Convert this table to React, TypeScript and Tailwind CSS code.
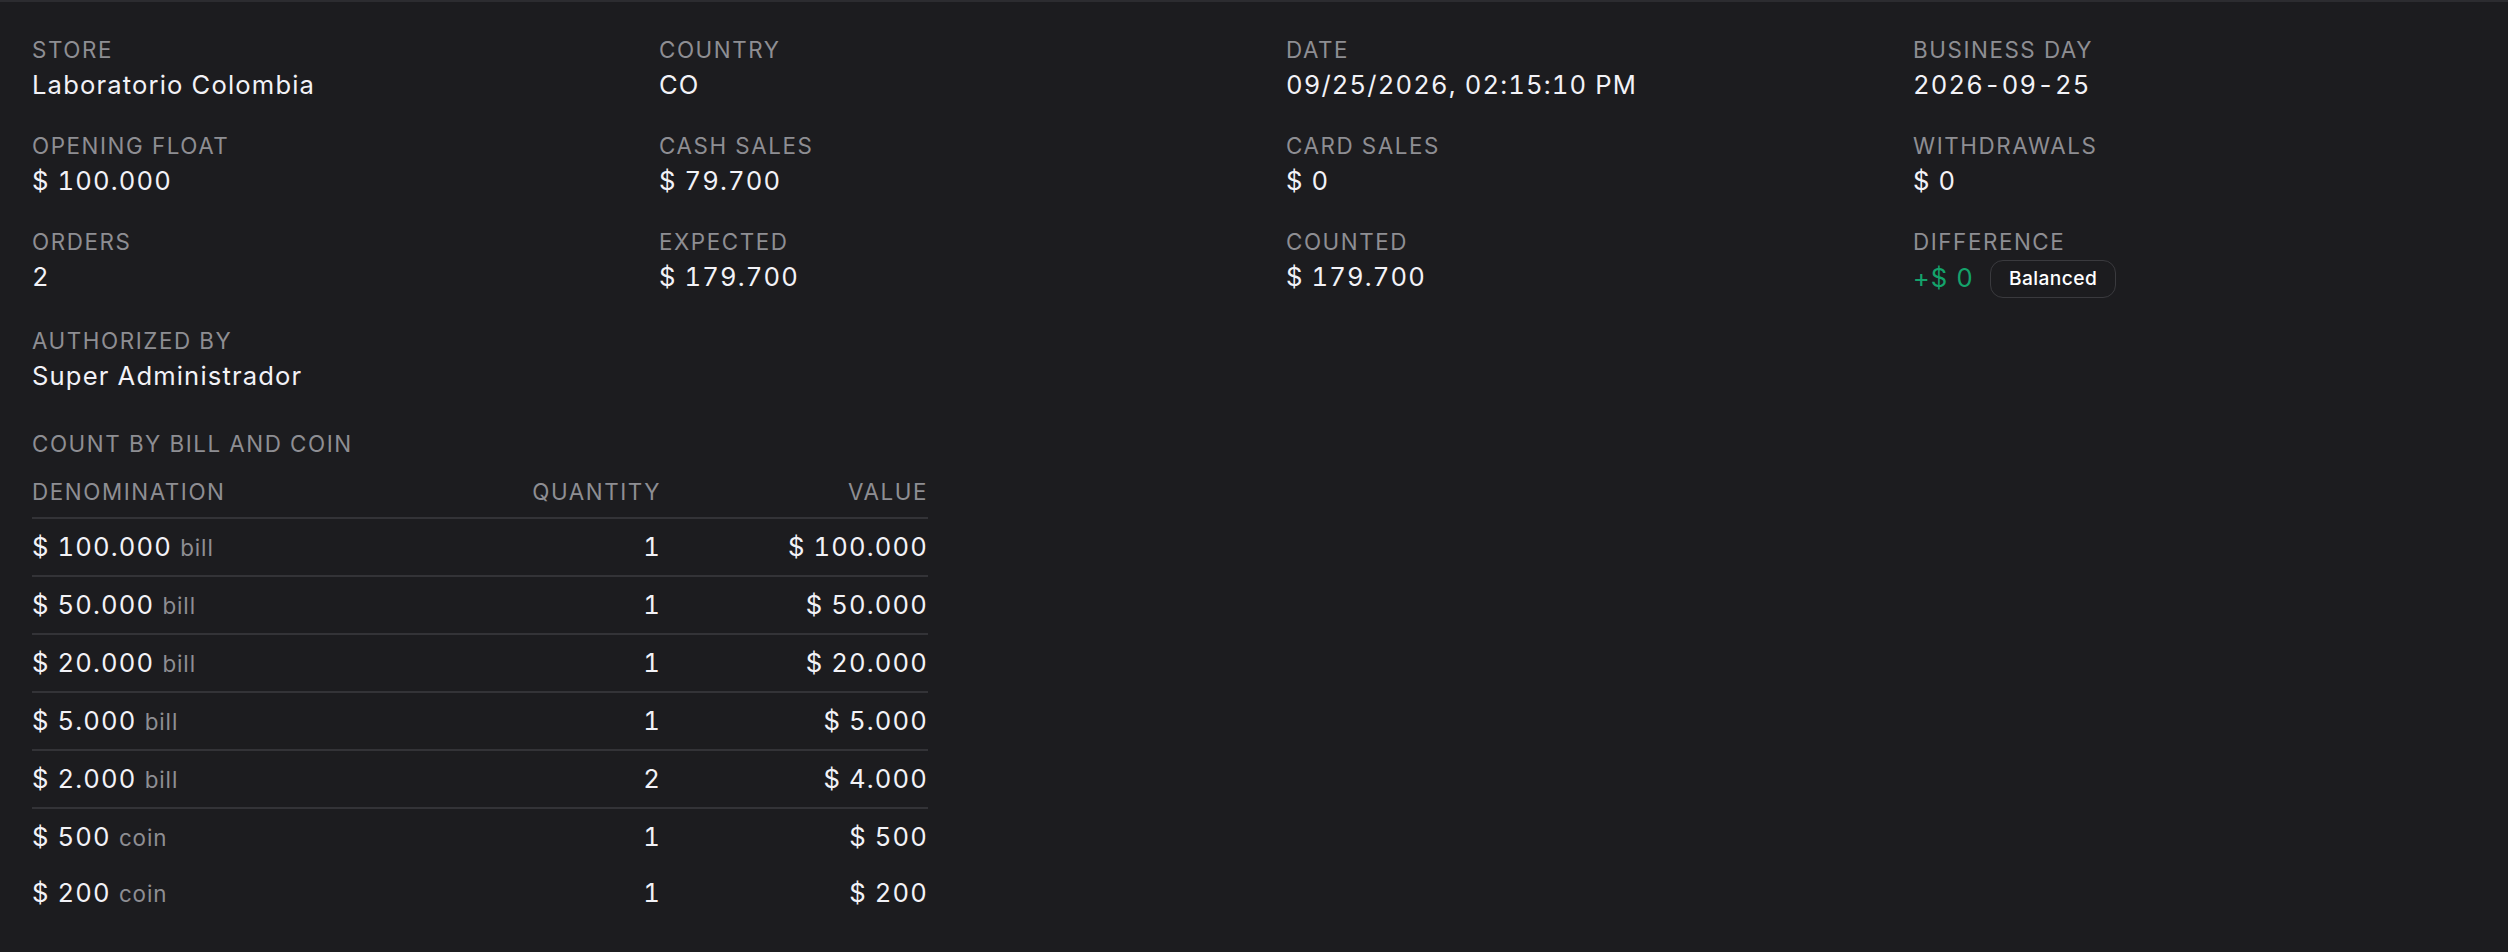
import React from 'react';

interface Field {
  label: string;
  value: string;
}

interface CountRow {
  amount: string;
  kind: 'bill' | 'coin';
  qty: number;
  total: string;
}

const fields: Field[] = [
  { label: 'Store', value: 'Laboratorio Colombia' },
  { label: 'Country', value: 'CO' },
  { label: 'Date', value: '09/25/2026, 02:15:10 PM' },
  { label: 'Business day', value: '2026-09-25' },
  { label: 'Opening float', value: '$ 100.000' },
  { label: 'Cash sales', value: '$ 79.700' },
  { label: 'Card sales', value: '$ 0' },
  { label: 'Withdrawals', value: '$ 0' },
  { label: 'Orders', value: '2' },
  { label: 'Expected', value: '$ 179.700' },
  { label: 'Counted', value: '$ 179.700' },
];

const rows: CountRow[] = [
  { amount: '$ 100.000', kind: 'bill', qty: 1, total: '$ 100.000' },
  { amount: '$ 50.000', kind: 'bill', qty: 1, total: '$ 50.000' },
  { amount: '$ 20.000', kind: 'bill', qty: 1, total: '$ 20.000' },
  { amount: '$ 5.000', kind: 'bill', qty: 1, total: '$ 5.000' },
  { amount: '$ 2.000', kind: 'bill', qty: 2, total: '$ 4.000' },
  { amount: '$ 500', kind: 'coin', qty: 1, total: '$ 500' },
  { amount: '$ 200', kind: 'coin', qty: 1, total: '$ 200' },
];

const Label = ({ children }: { children: React.ReactNode }) => (
  <div className="text-[22.4px] leading-[32px] uppercase tracking-[0.07em] text-[#8e8e93]">{children}</div>
);

const App = () => {
  return (
    <div className="min-h-screen bg-[#1c1c1f] border-t-2 border-[#2c2c30] px-8 pt-8 font-['Inter',_sans-serif] tabular-nums text-[#f2f2f7]">
      <div className="grid grid-cols-4 gap-x-16 gap-y-[25.6px]">
        {fields.map((f) => (
          <div key={f.label}>
            <Label>{f.label}</Label>
            <div className="text-[25.6px] leading-[38.4px] tracking-[0.045em]">{f.value}</div>
          </div>
        ))}
        <div>
          <Label>Difference</Label>
          <div className="flex items-center h-[41px] gap-[16px]">
            <span className="text-[25.6px] leading-[38.4px] tracking-[0.045em] text-[#14a36b]">+$ 0</span>
            <span className="h-[38px] flex items-center px-[18px] rounded-[13px] border-[1.5px] border-[#3a3a3e] text-[19.2px] font-medium tracking-[0.02em] text-white">
              Balanced
            </span>
          </div>
        </div>
        <div>
          <Label>Authorized by</Label>
          <div className="text-[25.6px] leading-[38.4px] tracking-[0.045em]">Super Administrador</div>
        </div>
      </div>

      <div className="mt-[33px] w-[896px]">
        <div className="mb-4">
          <Label>Count by bill and coin</Label>
        </div>
        <div className="grid grid-cols-[1fr_200px_267px] pb-[9px] border-b-2 border-[#333337] text-[22.4px] leading-[32px] uppercase tracking-[0.07em] text-[#8e8e93]">
          <div>Denomination</div>
          <div className="text-right">Quantity</div>
          <div className="text-right">Value</div>
        </div>
        {rows.map((r) => (
          <div
            key={r.amount}
            className={`grid grid-cols-[1fr_200px_267px] items-center h-[56px] box-content text-[25.6px] leading-[38.4px] tracking-[0.045em] ${
              r.kind === 'bill' ? 'border-b-2 border-[#333337]' : ''
            }`}
          >
            <div>
              {r.amount}{' '}
              <span className="text-[22.4px] leading-none tracking-[0.04em] text-[#8e8e93]">{r.kind}</span>
            </div>
            <div className="text-right">{r.qty}</div>
            <div className="text-right">{r.total}</div>
          </div>
        ))}
      </div>
    </div>
  );
};

export default App;
